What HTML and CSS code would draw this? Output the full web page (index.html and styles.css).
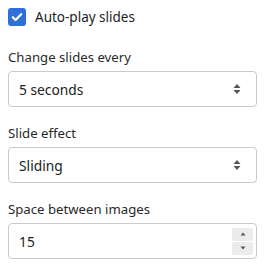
FILE: index.html
```html
<!DOCTYPE html>
<html>
<head>
<meta charset="utf-8">
<link rel="stylesheet" href="styles.css">
</head>
<body>
<div class="panel">
  <label class="check-row">
    <span class="checkbox">
      <svg width="18" height="18" viewBox="0 0 18 18"><path d="M4.8 9.2 L7.6 12 L13.2 6.2" fill="none" stroke="#fff" stroke-width="2.2" stroke-linecap="round" stroke-linejoin="round"/></svg>
    </span>
    <span class="check-label">Auto-play slides</span>
  </label>

  <div class="field">
    <div class="field-label">Change slides every</div>
    <div class="control">
      <span class="value">5 seconds</span>
      <svg class="arrows" width="10" height="14" viewBox="0 0 10 14"><path d="M5 2 L8.5 6 H1.5 Z M5 12 L8.5 8 H1.5 Z" fill="#555"/></svg>
    </div>
  </div>

  <div class="field">
    <div class="field-label">Slide effect</div>
    <div class="control">
      <span class="value">Sliding</span>
      <svg class="arrows" width="10" height="14" viewBox="0 0 10 14"><path d="M5 2 L8.5 6 H1.5 Z M5 12 L8.5 8 H1.5 Z" fill="#555"/></svg>
    </div>
  </div>

  <div class="field">
    <div class="field-label">Space between images</div>
    <div class="control number">
      <span class="value">15</span>
      <div class="spin">
        <span class="spin-btn"><svg width="8" height="6" viewBox="0 0 8 6"><path d="M4 1.5 L6.5 4.5 H1.5 Z" fill="#555"/></svg></span>
        <span class="spin-btn"><svg width="8" height="6" viewBox="0 0 8 6"><path d="M4 4.5 L6.5 1.5 H1.5 Z" fill="#555"/></svg></span>
      </div>
    </div>
  </div>
</div>
</body>
</html>
```

FILE: styles.css
```css
html, body {
  margin: 0;
  padding: 0;
  background: #fff;
}
body {
  font-family: "Noto Sans", "Open Sans", sans-serif;
  font-size: 13.2px;
  color: #222;
}
.panel {
  padding: 8px 7px 8px 8px;
  display: flex;
  flex-direction: column;
}
.check-row {
  display: flex;
  align-items: center;
  gap: 9px;
  height: 18px;
}
.checkbox {
  width: 18px;
  height: 18px;
  border-radius: 3px;
  background: #2f6fd8;
  display: flex;
}
.check-label {
  font-size: 13.5px;
  color: #222;
}
.field {
  margin-top: 21px;
  display: flex;
  flex-direction: column;
  gap: 4px;
}
.field + .field {
  margin-top: 16px;
}
.field-label {
  line-height: 20px;
  color: #2a2a2a;
}
.control {
  height: 34px;
  border: 1px solid #c9c9c9;
  border-radius: 4px;
  display: flex;
  align-items: center;
  justify-content: space-between;
  padding: 0 14px 0 10px;
  position: relative;
}
.value {
  font-size: 13.8px;
  color: #222;
}
.control.number {
  padding-right: 3px;
}
.spin {
  display: flex;
  flex-direction: column;
  gap: 1px;
}
.spin-btn {
  width: 21px;
  height: 13px;
  background: #ececec;
  border-radius: 2px;
  display: flex;
  align-items: center;
  justify-content: center;
}
```
